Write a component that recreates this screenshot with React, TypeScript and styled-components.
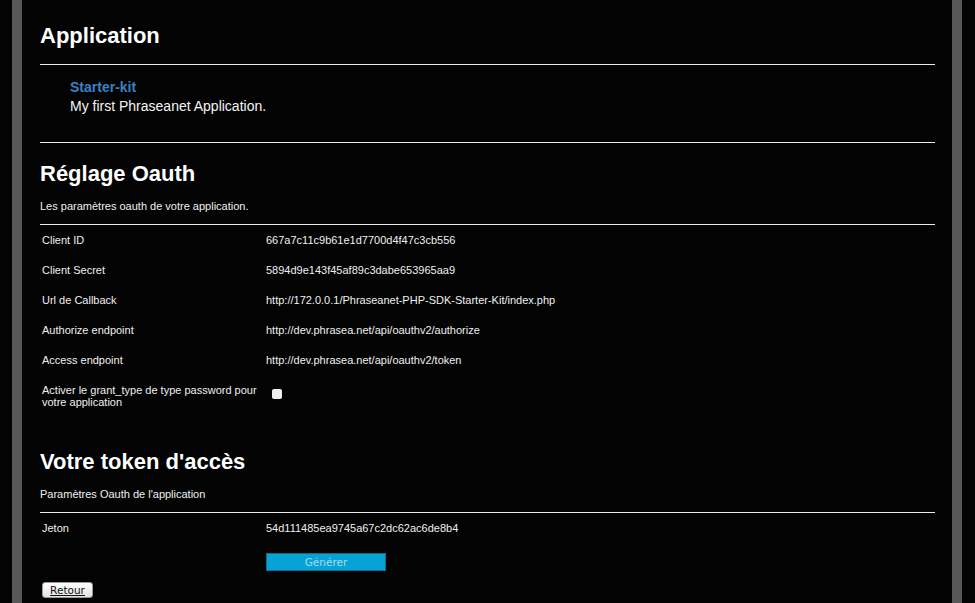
import styled, { createGlobalStyle } from 'styled-components'

const GlobalStyle = createGlobalStyle`
  html, body {
    margin: 0;
    padding: 0;
    background-color: #030303;
  }

  body {
    font-family: "Liberation Sans", Arial, Helvetica, sans-serif;
    color: #fff;
  }
`;

interface SettingRow {
  label: string;
  value?: string;
  checkbox?: boolean;
}

const oauthRows: SettingRow[] = [
  { label: 'Client ID', value: '667a7c11c9b61e1d7700d4f47c3cb556' },
  { label: 'Client Secret', value: '5894d9e143f45af89c3dabe653965aa9' },
  { label: 'Url de Callback', value: 'http://172.0.0.1/Phraseanet-PHP-SDK-Starter-Kit/index.php' },
  { label: 'Authorize endpoint', value: 'http://dev.phrasea.net/api/oauthv2/authorize' },
  { label: 'Access endpoint', value: 'http://dev.phrasea.net/api/oauthv2/token' },
  { label: 'Activer le grant_type de type password pour votre application', checkbox: true },
];

const App = () => {
  return (
    <>
      <GlobalStyle />
      <PageFrame>
        <Title>Application</Title>
        <Rule $top={15} />
        <AppInfo>
          <AppName>Starter-kit</AppName>
          <AppDesc>My first Phraseanet Application.</AppDesc>
        </AppInfo>
        <Rule $top={26} />

        <Title $top={18}>Réglage Oauth</Title>
        <Subtitle $top={12}>Les paramètres oauth de votre application.</Subtitle>
        <Rule $top={11} />
        <SettingsTable>
          <tbody>
            {
              oauthRows.map(row => (
                <tr key={row.label}>
                  <LabelCell>{ row.label }</LabelCell>
                  <ValueCell>
                    {
                      row.checkbox
                        ? <Checkbox type="checkbox" readOnly />
                        : row.value
                    }
                  </ValueCell>
                </tr>
              ))
            }
          </tbody>
        </SettingsTable>

        <Title $top={32}>Votre token d'accès</Title>
        <Subtitle $top={12}>Paramètres Oauth de l'application</Subtitle>
        <Rule $top={11} />
        <SettingsTable>
          <tbody>
            <tr>
              <LabelCell>Jeton</LabelCell>
              <ValueCell>54d111485ea9745a67c2dc62ac6de8b4</ValueCell>
            </tr>
            <tr>
              <ButtonCell />
              <ButtonCell>
                <GenerateBtn type="button">Générer</GenerateBtn>
              </ButtonCell>
            </tr>
          </tbody>
        </SettingsTable>
        <BackBtn type="button">Retour</BackBtn>
      </PageFrame>
    </>
  )
}

const PageFrame = styled.div`
  box-sizing: border-box;
  min-height: 100vh;
  margin: 0 13px 0 12px;
  padding: 23px 17px 0 18px;
  border-left: 10px solid #575757;
  border-right: 10px solid #575757;
`;

const Title = styled.h1<{ $top?: number }>`
  margin: ${({ $top }) => $top ?? 0}px 0 0;
  font-size: 22px;
  line-height: 26px;
  font-weight: 700;
  color: #fff;
`;

const Rule = styled.hr<{ $top: number }>`
  height: 1px;
  margin: ${({ $top }) => $top}px 0 0;
  border: 0;
  background-color: #ececec;
`;

const AppInfo = styled.div`
  padding: 13px 0 0 30px;
  font-size: 14px;
  line-height: 19px;
`;

const AppName = styled.strong`
  display: block;
  font-weight: 700;
  color: #3d80c3;
`;

const AppDesc = styled.p`
  margin: 0;
  color: #f4f4f4;
`;

const Subtitle = styled.p<{ $top: number }>`
  margin: ${({ $top }) => $top}px 0 0;
  font-size: 11px;
  line-height: 14px;
  color: #f0f0f0;
`;

const SettingsTable = styled.table`
  width: 100%;
  border-collapse: collapse;
  font-size: 11px;
  line-height: 12px;
  color: #f0f0f0;
`;

const LabelCell = styled.td`
  width: 224px;
  padding: 9px 0 9px 2px;
  vertical-align: middle;
`;

const ValueCell = styled.td`
  padding: 9px 0;
  vertical-align: middle;
`;

const ButtonCell = styled.td`
  padding: 10px 0 0;
`;

const Checkbox = styled.input`
  appearance: none;
  display: block;
  width: 10px;
  height: 10px;
  margin: 0 0 4px 6px;
  border: 0;
  border-radius: 2px;
  background-color: #efefef;
`;

const GenerateBtn = styled.button`
  display: block;
  width: 120px;
  height: 18px;
  padding: 0;
  border: 1px solid #0c6d92;
  background-color: #07a2d6;
  font-family: "DejaVu Sans", "Lucida Grande", sans-serif;
  font-size: 10.5px;
  color: #a9dcf1;
`;

const BackBtn = styled.button`
  display: block;
  width: 51px;
  height: 16px;
  margin: 11px 0 0 2px;
  padding: 0;
  border: 1px solid #9a9a9a;
  border-radius: 3px;
  background: linear-gradient(#ffffff, #e2e2e2);
  font-family: "DejaVu Sans", "Lucida Grande", sans-serif;
  font-size: 10.5px;
  line-height: 14px;
  color: #111;
  text-decoration: underline;
`;

export default App
